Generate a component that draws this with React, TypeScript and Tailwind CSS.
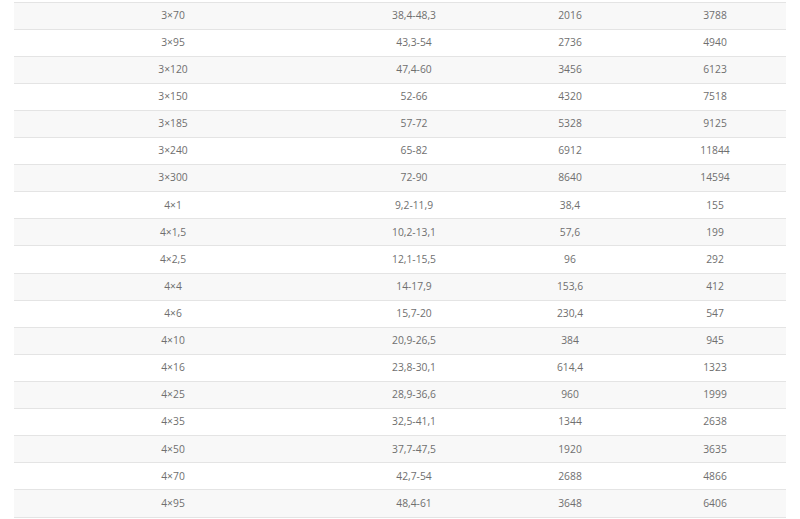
import React from "react";

const rows: [string, string, string, string][] = [
  ["3×70", "38,4-48,3", "2016", "3788"],
  ["3×95", "43,3-54", "2736", "4940"],
  ["3×120", "47,4-60", "3456", "6123"],
  ["3×150", "52-66", "4320", "7518"],
  ["3×185", "57-72", "5328", "9125"],
  ["3×240", "65-82", "6912", "11844"],
  ["3×300", "72-90", "8640", "14594"],
  ["4×1", "9,2-11,9", "38,4", "155"],
  ["4×1,5", "10,2-13,1", "57,6", "199"],
  ["4×2,5", "12,1-15,5", "96", "292"],
  ["4×4", "14-17,9", "153,6", "412"],
  ["4×6", "15,7-20", "230,4", "547"],
  ["4×10", "20,9-26,5", "384", "945"],
  ["4×16", "23,8-30,1", "614,4", "1323"],
  ["4×25", "28,9-36,6", "960", "1999"],
  ["4×35", "32,5-41,1", "1344", "2638"],
  ["4×50", "37,7-47,5", "1920", "3635"],
  ["4×70", "42,7-54", "2688", "4866"],
  ["4×95", "48,4-61", "3648", "6406"],
];

export default function App() {
  return (
    <div className="w-[800px] h-[519px] bg-white overflow-hidden pt-[1.5px] pl-[14px]">
      <div
        className="w-[772px] text-[10.3px] text-[#6f6f6f] border-b border-[#e4e4e4]"
        style={{ fontFamily: '"Open Sans", "Noto Sans", sans-serif' }}
      >
        {rows.map((r, i) => (
          <div
            key={i}
            className={`flex items-center h-[27.12px] border-t border-[#e4e4e4] ${
              i % 2 === 0 ? "bg-[#f8f8f8]" : "bg-white"
            }`}
          >
            <div className="w-[318px] text-center">{r[0]}</div>
            <div className="w-[164px] text-center">{r[1]}</div>
            <div className="w-[148px] text-center">{r[2]}</div>
            <div className="w-[142px] text-center pr-[0px]">{r[3]}</div>
          </div>
        ))}
      </div>
    </div>
  );
}
